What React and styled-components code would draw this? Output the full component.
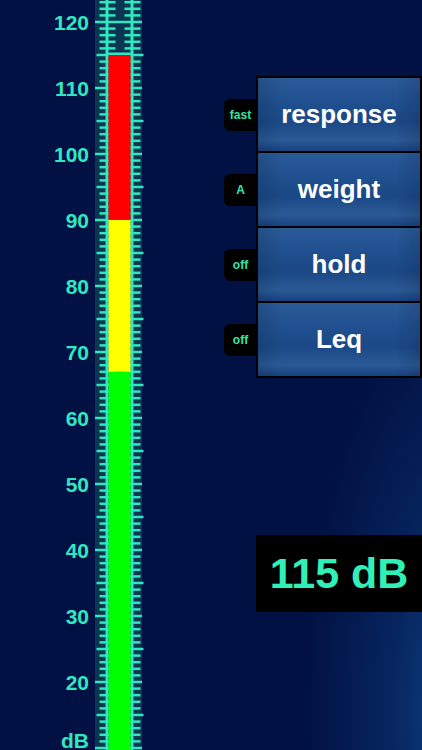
import React from 'react'
import styled, { createGlobalStyle } from 'styled-components'

const GlobalStyle = createGlobalStyle`
  html, body {
    margin: 0;
    padding: 0;
    height: 100%;
    background: #021143;
    font-family: "Liberation Sans", Arial, sans-serif;
  }
  #root {
    height: 100%;
  }
`

const TEAL = '#2fe8c2'
const TOP = 22
const STEP = 6.6

const yOf = (db) => TOP + (120 - db) * STEP

const Meter = ({ level }) => {
    const ticks = []
    for (let db = 10; db <= 123; db++) {
        const y = yOf(db)
        if (db % 10 === 0) {
            ticks.push(<rect key={db} x={95} y={y - 1.25} width={47} height={2.5} fill={TEAL} />)
        } else {
            const len = db % 5 === 0 ? 10 : 7
            ticks.push(
                <g key={db} fill={TEAL}>
                    <rect x={106.5 - len} y={y - 1.25} width={len * 2 + 2} height={2.5} />
                    <rect x={131.5 - len} y={y - 1.25} width={len * 2 + 2} height={2.5} />
                </g>
            )
        }
    }

    const labels = []
    for (let db = 20; db <= 120; db += 10) {
        labels.push(
            <text key={db} x={89} y={yOf(db) + 7.5} textAnchor="end">
                {db}
            </text>
        )
    }

    const top = yOf(level)
    const redEnd = yOf(90)
    const yellowEnd = yOf(67)

    return (
        <MeterSvg width="150" height="750" viewBox="0 0 150 750">
            <rect x={95} y={0} width={47} height={750} fill="#0b3550" />
            {ticks}
            <rect x={105.5} y={0} width={3} height={750} fill={TEAL} />
            <rect x={130.5} y={0} width={3} height={750} fill={TEAL} />
            <rect x={106} y={top - 2.5} width={27} height={2.5} fill={TEAL} />
            <rect x={108.5} y={top} width={22} height={redEnd - top} fill="#ff0000" />
            <rect x={108.5} y={redEnd} width={22} height={yellowEnd - redEnd} fill="#ffff00" />
            <rect x={108.5} y={yellowEnd} width={22} height={750 - yellowEnd} fill="#00ff00" />
            <g fill={TEAL} fontSize="21" fontWeight="bold" fontFamily="Liberation Sans, Arial, sans-serif">
                {labels}
                <text x={89} y={748} textAnchor="end">dB</text>
            </g>
        </MeterSvg>
    )
}

const controls = [
    { tag: 'fast', label: 'response' },
    { tag: 'A', label: 'weight' },
    { tag: 'off', label: 'hold' },
    { tag: 'off', label: 'Leq' },
]

export default function App() {
    return (
        <>
            <GlobalStyle />
            <Screen>
                <Meter level={115} />
                <Side>
                    <Controls>
                        <TabColumn>
                            {controls.map((c) => (
                                <TabSlot key={c.label}>
                                    <Tab>{c.tag}</Tab>
                                </TabSlot>
                            ))}
                        </TabColumn>
                        <ButtonStack>
                            {controls.map((c) => (
                                <Button key={c.label}>{c.label}</Button>
                            ))}
                        </ButtonStack>
                    </Controls>
                    <Readout>115 dB</Readout>
                </Side>
            </Screen>
        </>
    )
}

const Screen = styled.div`
    display: flex;
    flex-direction: row;
    width: 422px;
    height: 750px;
    overflow: hidden;
    background:
        radial-gradient(ellipse 160px 420px at 110% 95%, rgba(16, 72, 140, 0.95) 0%, rgba(10, 52, 115, 0.6) 45%, rgba(2, 17, 67, 0) 100%),
        #021143;
`

const MeterSvg = styled.svg`
    display: block;
    flex: none;
`

const Side = styled.div`
    flex: 1;
    display: flex;
    flex-direction: column;
    align-items: flex-end;
    padding-top: 76px;
`

const Controls = styled.div`
    display: flex;
    flex-direction: row;
`

const TabColumn = styled.div`
    display: flex;
    flex-direction: column;
    gap: 2px;
    padding-top: 2px;
    margin-right: -1px;
`

const TabSlot = styled.div`
    height: 73px;
    display: flex;
    align-items: center;
`

const Tab = styled.div`
    width: 33px;
    height: 32px;
    background: #000;
    border-radius: 6px 0 0 6px;
    display: flex;
    align-items: center;
    justify-content: center;
    color: #33e6a8;
    font-size: 12px;
    font-weight: bold;
`

const ButtonStack = styled.div`
    display: flex;
    flex-direction: column;
    gap: 2px;
    padding: 2px;
    background: #000;
    width: 162px;
`

const Button = styled.div`
    height: 73px;
    display: flex;
    align-items: center;
    justify-content: center;
    color: #fff;
    font-size: 26px;
    font-weight: bold;
    background:
        linear-gradient(to right, rgba(0, 0, 0, 0.12), rgba(255, 255, 255, 0) 15%, rgba(255, 255, 255, 0) 85%, rgba(0, 0, 0, 0.12)),
        linear-gradient(to bottom, #2a5a98 0%, #1f4f8e 35%, #1b4886 60%, #2a5a96 85%, #184180 100%);
`

const Readout = styled.div`
    margin-top: 157px;
    width: 166px;
    height: 77px;
    background: #000;
    display: flex;
    align-items: center;
    justify-content: center;
    color: #30f0b8;
    font-size: 43px;
    font-weight: bold;
`
